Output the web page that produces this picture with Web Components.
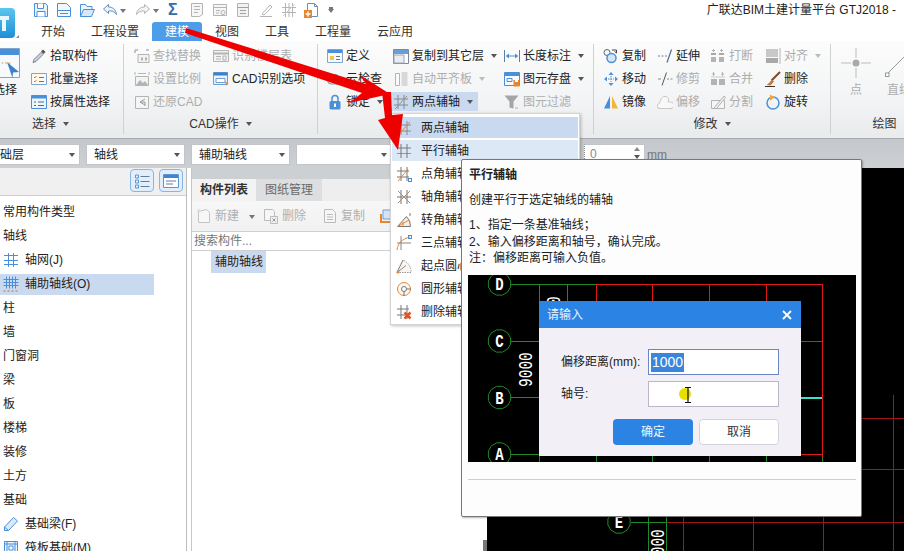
<!DOCTYPE html>
<html lang="zh">
<head>
<meta charset="utf-8">
<title>GTJ2018</title>
<style>
  html, body { margin: 0; padding: 0; background: #fff; overflow: hidden; }
  body { font: 12px/16px "Liberation Sans", "Noto Sans CJK SC", sans-serif; color: #222; }
</style>
</head>
<body>

<gt-app>
  <gt-topbar slot="top" title-text="广联达BIM土建计量平台 GTJ2018 - ">
    <gt-tab>开始</gt-tab>
    <gt-tab>工程设置</gt-tab>
    <gt-tab active>建模</gt-tab>
    <gt-tab>视图</gt-tab>
    <gt-tab>工具</gt-tab>
    <gt-tab>工程量</gt-tab>
    <gt-tab>云应用</gt-tab>
  </gt-topbar>

  <gt-ribbon slot="ribbon">
    <gt-group label="选择" style="--w:124px;--cols:31px 92px;--lp:22px">
      <gt-big icon="bigselect" style="grid-row:1/4;margin-left:-10px;width:30px">选择</gt-big>
      <gt-rb icon="pick">拾取构件</gt-rb>
      <gt-rb icon="batch" style="grid-column:2">批量选择</gt-rb>
      <gt-rb icon="attr" style="grid-column:2">按属性选择</gt-rb>
    </gt-group>
    <gt-group label="CAD操作" style="--w:194px;--pl:10px;--cols:79px 100px">
      <gt-rb icon="find" disabled>查找替换</gt-rb>
      <gt-rb icon="floor" disabled>识别楼层表</gt-rb>
      <gt-rb icon="scale" disabled>设置比例</gt-rb>
      <gt-rb icon="cadopt">CAD识别选项</gt-rb>
      <gt-rb icon="restore" disabled>还原CAD</gt-rb>
    </gt-group>
    <gt-group label="" style="--w:276px;--pl:9px;--cols:66px 111px 90px">
      <gt-rb icon="define">定义</gt-rb>
      <gt-rb icon="copylayer" caret>复制到其它层</gt-rb>
      <gt-rb icon="length" caret>长度标注</gt-rb>
      <gt-rb icon="cloud">云检查</gt-rb>
      <gt-rb icon="align" caret disabled>自动平齐板</gt-rb>
      <gt-rb icon="store" caret>图元存盘</gt-rb>
      <gt-rb icon="lock" caret>锁定</gt-rb>
      <gt-rb icon="twopt" caret active>两点辅轴</gt-rb>
      <gt-rb icon="filter" disabled>图元过滤</gt-rb>
    </gt-group>
    <gt-group label="修改" style="--w:237px;--pl:9px;--cols:54px 53px 55px 60px">
      <gt-rb icon="dup">复制</gt-rb>
      <gt-rb icon="extend">延伸</gt-rb>
      <gt-rb icon="break" disabled>打断</gt-rb>
      <gt-rb icon="alignr" caret disabled>对齐</gt-rb>
      <gt-rb icon="move">移动</gt-rb>
      <gt-rb icon="trim" disabled>修剪</gt-rb>
      <gt-rb icon="merge" disabled>合并</gt-rb>
      <gt-rb icon="broom">删除</gt-rb>
      <gt-rb icon="mirror">镜像</gt-rb>
      <gt-rb icon="offset" disabled>偏移</gt-rb>
      <gt-rb icon="split" disabled>分割</gt-rb>
      <gt-rb icon="rotate">旋转</gt-rb>
    </gt-group>
    <gt-group label="绘图" last style="--w:120px;--cols:50px 36px">
      <gt-big icon="bigpoint" disabled style="grid-row:1/4">点</gt-big>
      <gt-big icon="bigline" disabled style="grid-row:1/4">直线</gt-big>
    </gt-group>
  </gt-ribbon>

  <gt-toolbar slot="toolbar">
    <gt-select style="width:100px;margin-left:-20px">基础层</gt-select>
    <gt-select style="width:99px">轴线</gt-select>
    <gt-select style="width:99px">辅助轴线</gt-select>
    <gt-select style="width:96px"></gt-select>
    <gt-spin style="margin-left:186px">0</gt-spin>
  </gt-toolbar>

  <gt-left slot="left">
    <gt-item>常用构件类型</gt-item>
    <gt-item>轴线</gt-item>
    <gt-item icon="grid">轴网(J)</gt-item>
    <gt-item icon="subgrid" selected>辅助轴线(O)</gt-item>
    <gt-item>柱</gt-item>
    <gt-item>墙</gt-item>
    <gt-item>门窗洞</gt-item>
    <gt-item>梁</gt-item>
    <gt-item>板</gt-item>
    <gt-item>楼梯</gt-item>
    <gt-item>装修</gt-item>
    <gt-item>土方</gt-item>
    <gt-item>基础</gt-item>
    <gt-item icon="pencil">基础梁(F)</gt-item>
    <gt-item icon="raft">筏板基础(M)</gt-item>
  </gt-left>

  <gt-list slot="list"></gt-list>
  <gt-canvas slot="canvas"></gt-canvas>

  <gt-menu slot="over">
    <gt-menu-item icon="m1" state="on">两点辅轴</gt-menu-item>
    <gt-menu-item icon="m2" state="hover">平行辅轴</gt-menu-item>
    <gt-menu-item icon="m3">点角辅轴</gt-menu-item>
    <gt-menu-item icon="m4">轴角辅轴</gt-menu-item>
    <gt-menu-item icon="m5">转角辅轴</gt-menu-item>
    <gt-menu-item icon="m6">三点辅轴</gt-menu-item>
    <gt-menu-item icon="m7">起点圆心辅轴</gt-menu-item>
    <gt-menu-item icon="m8">圆形辅轴</gt-menu-item>
    <gt-menu-item icon="m9">删除辅轴</gt-menu-item>
  </gt-menu>

  <gt-tip slot="over" heading="平行辅轴">
    <p>创建平行于选定轴线的辅轴</p>
    <div>1、指定一条基准轴线；</div>
    <div>2、输入偏移距离和轴号，确认完成。</div>
    <div>注：偏移距离可输入负值。</div>
  </gt-tip>

  <gt-arrows slot="over"></gt-arrows>
</gt-app>

<script>
// icon drawings, all in a 16x16 box unless they carry their own viewBox
const B = '#4a90d9', G = '#b4b4b4', O = '#e8862e', D = '#6b7480';
const ICONS = {
  save: `<path d="M1.5 1.5h11l2 2v11h-13z" fill="#eaf2fb" stroke="${B}"/><path d="M4.5 1.5v5h6v-5M4 14.5v-5h8v5" fill="#fff" stroke="${B}"/>`,
  newdoc: `<path d="M1.5 1.5h9l4 4v9h-13z" fill="#f3f7fc" stroke="${B}"/><path d="M1.5 8.5h13M4 11.5h8" stroke="${B}"/>`,
  open: `<path d="M1.5 14.5v-12h5l1.5 2h5v3" fill="#eef4fb" stroke="${B}"/><path d="M1.5 14.5l3-7h11l-3 7z" fill="#d7e7f8" stroke="${B}"/>`,
  undo: `<path d="M6.5 2.5L1.5 7l5 4.5V9c3-.5 6 .5 8 3.5C14 7.5 10.5 5 6.5 5z" fill="#eef3f8" stroke="#5f8fc0"/>`,
  redo: `<path d="M9.5 2.5l5 4.5-5 4.5V9c-3-.5-6 .5-8 3.5C2 7.5 5.5 5 9.5 5z" fill="#f4f4f4" stroke="${G}"/>`,
  q1: `<path d="M2.5 1.5h11v11l-3 2h-8z" fill="#f6f6f6" stroke="${G}"/><path d="M5 4.5h6M5 7.5h6M5 10.5h4" stroke="${G}"/>`,
  q2: `<path d="M1.5 2.5h13v11h-13z" fill="#f6f6f6" stroke="${G}"/><path d="M1.5 5.5h13M4 8.5h4M4 11h3" stroke="${G}"/><circle cx="11" cy="10.5" r="2" fill="none" stroke="${G}"/>`,
  q3: `<path d="M2.5 1.5h11v13h-11z" fill="#f2f2f2" stroke="${G}"/><path d="M2.5 5.5h11M5 8.5h6M5 11.5h6" stroke="#a0a0a0"/>`,
  q4: `<path d="M2 14.5h12M4 12l8-9 2 2-8 8z" fill="none" stroke="${G}"/>`,
  q5: `<path d="M1 5.5h14M1 10.5h14M4.5 1v14M8 1v14M11.5 1v14" stroke="${G}"/><path d="M2 14L14 2" stroke="#ccc"/>`,
  q6: `<path d="M3.5 1.5h7l3 3v10h-10z" fill="#fff" stroke="#6c8fb5"/><path d="M10.5 1.5v3h3" fill="none" stroke="#6c8fb5"/><path d="M0 8h8v8H0z" fill="${O}"/><path d="M4 9.5v5M1.5 12h5" stroke="#fff" stroke-width="1.5"/>`,
  pick: `<path d="M2 14.5l1-3 7-7 2 2-7 7z" fill="#c9d2dc" stroke="#7a8591"/><path d="M10 3.5l2-2 2.5 2.5-2 2z" fill="#555"/>`,
  batch: `<path d="M.5 2.5h15v11H.5z" fill="#fdf8f0" stroke="#7ea6d3"/><path d="M3 6l1 1 1.5-2M3 10l1 1 1.5-2" fill="none" stroke="${O}"/><path d="M8 6.5h5M8 10.5h5" stroke="${D}"/>`,
  attr: `<path d="M.5 1.5h15v13H.5z" fill="#eef5fc" stroke="${B}"/><path d="M.5 1.5h15v3H.5z" fill="${B}"/><path d="M3 8h2M7 8h6M3 11.5h2M7 11.5h6" stroke="#4f6c8c"/>`,
  find: `<path d="M1 2h3M1 2v3M12 2h3" stroke="${G}" stroke-width="1.5"/><path d="M4 6.5h11v8H4z" fill="#f3f3f3" stroke="${G}"/><path d="M7 9.5h2v3H7zM11 9.5h2v3h-2z" fill="${G}"/>`,
  scale: `<path d="M1.5 5.5h13v9h-13z" fill="#f3f3f3" stroke="${G}"/><path d="M2 14l4-5 3 3 2-2 3 4z" fill="${G}"/><path d="M1 1v3M15 1v3M4 2.5h8" stroke="${G}"/>`,
  restore: `<path d="M1.5 2.5h13v12h-13z" fill="#f5f5f5" stroke="${G}"/><path d="M11 5L6 8l5 3M6 8h5v4" fill="none" stroke="#999"/>`,
  floor: `<path d="M.5 2.5h15v11H.5z" fill="#f3f3f3" stroke="${G}"/><path d="M.5 5.5h15" stroke="${G}" stroke-width="2"/><path d="M3 8.5h5M3 11h5M10 8h3v4h-3z" fill="none" stroke="${G}"/>`,
  cadopt: `<path d="M.5 1.5h14v12H.5z" fill="#eaf2fb" stroke="#6f9fd2"/><path d="M.5 1.5h14v3H.5z" fill="#3f7fc8"/><path d="M3 7.5h9v4H3z" fill="#fff" stroke="#6f9fd2"/><path d="M12 10l3.5 3-2 .2-.5 2z" fill="${O}"/>`,
  define: `<path d="M.5 1.5h15v13H.5z" fill="#f7f9fc" stroke="#7ea6d3"/><path d="M1 2h14v3H1z" fill="${B}"/><path d="M3 8h4v4H3z" fill="#f3c64a"/><path d="M9 8.5h4M9 11.5h4" stroke="${D}"/>`,
  cloud: `<path d="M4 13a3 3 0 0 1-.5-6A4.5 4.5 0 0 1 12 6a3.5 3.5 0 0 1 0 7z" fill="#cfd9e4" stroke="#7e98b4"/>`,
  lock: `<rect x="2.5" y="7" width="11" height="8.5" rx="1.5" fill="${B}"/><path d="M5 7V4.5a3 3 0 0 1 6 0V7" fill="none" stroke="${B}" stroke-width="1.5"/><rect x="7" y="9.5" width="2" height="3.5" fill="#fff"/>`,
  copylayer: `<path d="M.5 1.5h15v14H.5z" fill="#fff" stroke="#7a8a9c"/><path d="M1 2h14v4H1z" fill="#6d9ed1"/><path d="M1 7h10v8H1z" fill="#e9edf1" stroke="#9aa5b1"/>`,
  align: `<path d="M2.5 2.5h4v12h-4z" fill="#fafafa" stroke="${G}"/><path d="M8.5 1h6v14h-6z" fill="#d8d8d8"/>`,
  twopt: `<path d="M1 5h14M1 11h14M5 1v14M11 1v14" stroke="#7f8a96"/><path d="M2 15L14 2" stroke="#a98f7c"/>`,
  length: `<path d="M.5 2v12M15.5 2v12" stroke="#5f7f9f"/><path d="M2 8h12" stroke="${B}"/><path d="M2 8l3-2.5v5zM14 8l-3-2.5v5z" fill="${B}"/>`,
  store: `<path d="M.5 1.5h15v13H.5z" fill="#f7f9fc" stroke="${B}"/><path d="M1 2h14v3H1z" fill="${B}"/><path d="M3 7.5h5v3H3z" fill="none" stroke="${B}"/><path d="M9.5 9h6v6.5h-6z" fill="${O}"/><path d="M11 9h3v2h-3z" fill="#fff"/>`,
  filter: `<path d="M.5 1.5h14l-5 6v7l-4-1v-6z" fill="#a5a5a5"/><path d="M11 14h3" stroke="${G}"/>`,
  dup: `<circle cx="4" cy="4.5" r="3" fill="none" stroke="#5c6670"/><circle cx="8.5" cy="10" r="4.5" fill="#d4e5f7" stroke="${B}" stroke-width="1.5"/><path d="M9 2h4.500v3M11.5 3.5l2 1.500" fill="none" stroke="#444"/>`,
  extend: `<path d="M1 8h2M4.5 8h2M8 8h2" stroke="#7a8591"/><path d="M10 14.5L14.500 1.500" stroke="#4f6c8c" stroke-width="1.2"/>`,
  trim: `<path d="M1 8h3M10 8h2M13.5 8h2" stroke="#8a8a8a"/><path d="M5 14.5L9.500 1.500" stroke="#555"/>`,
  break: `<path d="M1 5h5v2H1zM9 5h5v2H9z" fill="#a8a8a8"/><path d="M1 9h5v5H1zM9 9h5v5H9z" fill="${G}"/><path d="M3.5 1v3M11.5 1v3M2 2.5h3M10 2.5h3" stroke="${G}"/>`,
  merge: `<path d="M1 8h6v6H1zM9 8h6v6H9z" fill="${G}"/><path d="M1 6h14" stroke="#ccc"/><path d="M3.5 1v4M12.5 1v4M2 3h3M11 3h3" stroke="${G}"/>`,
  split: `<path d="M1.5 6.5h13v8h-13z" fill="#f6f6f6" stroke="${G}"/><path d="M4 14L14 2l1.5 1.5L7 14" fill="#eee" stroke="${G}"/>`,
  alignr: `<path d="M1 1h12v8H1z" fill="#c8c8c8"/><path d="M1 10h12v5H1z" fill="#a8a8a8"/><path d="M15 0v16" stroke="${G}"/>`,
  move: `<path d="M8 1l2.5 3h-5zM8 15l2.5-3h-5zM1 8l3-2.5v5zM15 8l-3-2.5v5z" fill="${B}"/><path d="M5 8h6M8 5v6" stroke="${B}" stroke-dasharray="1.5 1"/>`,
  broom: `<path d="M15 1L6.5 9.5" stroke="#7d4a24" stroke-width="2"/><path d="M7 8.5l2 2-3.5 4-4-.5c2-1 3.500-3 5.500-5.500z" fill="#c07a3f"/><path d="M0 15.5h10" stroke="#333"/>`,
  mirror: `<path d="M7 2L1 14.5h6z" fill="${B}"/><path d="M9 2l6 12.5H9z" fill="#f2b53a"/>`,
  offset: `<path d="M3 14.5a2.5 2.5 0 0 1-.5-5c.5-3 2-7 5.5-7s4 3 3 5.5h2.5a3 3 0 0 1 0 6.500z" fill="#f8f8f8" stroke="#c8c8c8"/><path d="M1 14.5h14" stroke="#c8c8c8"/>`,
  rotate: `<circle cx="8" cy="9" r="6" fill="none" stroke="${B}" stroke-width="1.5"/><path d="M5 .5l5 3-5 3z" fill="#f2a33a"/>`,
  grid: `<path d="M1 3.5h14M1 8.5h14M1 12.5h14M5.5 1v14M10.5 1v14" stroke="${B}"/>`,
  subgrid: `<path d="M.5 3.5h15M.5 6.5h15M.5 9.5h15M3.5 .5v12M6.5 .5v12M9.5 .5v12M12.5 .5v12" stroke="${B}"/><path d="M.5 14h2v2h-2zM4.5 14h2v2h-2zM8.5 14h2v2h-2zM12.5 14h2v2h-2z" fill="#c9a58a"/>`,
  pencil: `<path d="M1.5 11l9-9.5 4 3.5-9 9.500h-4z" fill="#dbe9f8" stroke="${B}"/><path d="M1.5 11l4 3.5" stroke="${B}"/>`,
  raft: `<path d="M1.5 1.5h13v13h-13z" fill="#eaf2fb" stroke="${B}"/><path d="M4 1.5v13M12 1.5v13M1.5 4h13M1.5 12h13" stroke="${B}"/><path d="M6 6h4v4H6z" fill="#fff" stroke="${B}"/>`,
  listbtn: `<path d="M1.5 2h3v3h-3zM1.5 7h3v3h-3zM1.5 12h3v3h-3z" fill="none" stroke="#5a96d6"/><path d="M6.5 3.5h9M6.5 8.5h9M6.5 13.5h9" stroke="#5f7f9f"/>`,
  winbtn: `<path d="M.5 1.5h15v13H.5z" fill="#fff" stroke="#5a96d6"/><path d="M1 2h14v3H1z" fill="#3f86d1"/><path d="M3 8h10M3 11h7" stroke="#5f7f9f"/>`,
  newgrey: `<path d="M2.5 3.5l8-2 3 3v10h-11z" fill="#f7f7f7" stroke="#c4c4c4"/><path d="M1 1l3 3M4 1L1 4" stroke="#d8d8d8"/>`,
  delgrey: `<path d="M1.5 1.5h8l2 2v9h-10z" fill="#f6f6f6" stroke="#bbb"/><path d="M7.5 8.5h7v7h-7z" fill="#f0f0f0" stroke="#bbb"/><path d="M9.5 10.5l3 3M12.5 10.5l-3 3" stroke="#999"/>`,
  copygrey: `<path d="M2.5 1.5h8l3 3v10h-11z" fill="#f6f6f6" stroke="#bbb"/><path d="M5 6.5h6M5 9h6M5 11.5h6" stroke="#bbb"/>`,
  layer: `<path d="M1 15V6h2v7h11v2z" fill="${O}"/><path d="M4 2h10v9H4z" fill="#d5e5f6" stroke="#6f9fd2"/>`,
  m1: `<path d="M1 5h14M1 11h14M5 1v14M11 1v14" stroke="#8a8a8a"/><path d="M2 15L14 2" stroke="${O}"/>`,
  m2: `<path d="M1 5h14" stroke="#777"/><path d="M1 10.5h14" stroke="${O}"/><path d="M5 1v14M11 1v14" stroke="#777"/>`,
  m3: `<path d="M1 5h12M1 11h12M5 1v14M11 1v14" stroke="#777"/><path d="M2 15L12 3" stroke="${O}"/><rect x="12.5" y="12.5" width="3" height="3" fill="none" stroke="${B}"/>`,
  m4: `<path d="M1 8h14M5 1v14M11 1v14" stroke="#777"/><path d="M2 2l12 12M2 14L14 2" stroke="#a98f7c"/>`,
  m5: `<path d="M1.5 14.5h13a13 13 0 0 0-4-10z" fill="#f5ede5" stroke="#777"/><path d="M1.5 14.5L13 8M7 10v4.5" stroke="${O}"/><path d="M14 1v3" stroke="#777"/>`,
  m6: `<path d="M1 15C2 8 6 4 14 2" fill="none" stroke="${O}"/><path d="M1 8h14M5 1v14" stroke="#888"/><rect x="12.5" y=".5" width="3" height="3" fill="none" stroke="${B}"/>`,
  m7: `<path d="M1 14.5h14A13 13 0 0 0 7 2z" fill="#faf5f0" stroke="#999" stroke-dasharray="1.5 1"/><path d="M1 14.5L7 2M1 14.5l9-7" stroke="#888"/><circle cx="2" cy="14" r="1.5" fill="${O}"/>`,
  m8: `<circle cx="8" cy="8" r="6.5" fill="#fdf7f0" stroke="${O}"/><path d="M8 8h7M8 8v7" stroke="#777"/><circle cx="8" cy="8" r="2.5" fill="#fff" stroke="#777"/>`,
  m9: `<path d="M1 5h12M1 11h12M5 1v14M11 1v14" stroke="#777"/><path d="M8.5 8.5l6 6M14.5 8.5l-6 6" stroke="#e8501e" stroke-width="2.5"/>`,
  bigselect: `<svg viewBox="0 0 30 30" width="30" height="30"><path d="M.5 .5h29v29H.5z" fill="#f6f9fd" stroke="#7ea6d3"/><path d="M1 1h28v6H1z" fill="${B}"/><path d="M1 15h20" stroke="#e8a33a" stroke-dasharray="2 1.5"/><path d="M17 14l12 10-6 .5-.5 5.5z" fill="#3f7fc8"/></svg>`,
  bigpoint: `<svg viewBox="0 0 30 30" width="30" height="30"><path d="M15 0v10M15 20v10M0 15h10M20 15h10" stroke="#bbb"/><circle cx="15" cy="15" r="3.5" fill="#aaa"/></svg>`,
  bigline: `<svg viewBox="0 0 30 30" width="30" height="30"><path d="M4 25L28 1" stroke="#999"/><rect x="1.5" y="25" width="3.5" height="3.5" fill="#fff" stroke="#999"/></svg>`
};

const BASE = `font: 12px/16px "Liberation Sans", "Noto Sans CJK SC", sans-serif;`;

function mount(el, html) {
  el.attachShadow({mode: 'open'}).innerHTML = html;
}

class GtIcon extends HTMLElement {
  connectedCallback() {
    const body = ICONS[this.getAttribute('name')] || '';
    const svg = body.startsWith('<svg') ? body : `<svg viewBox="0 0 16 16" width="16" height="16">${body}</svg>`;
    mount(this, `<style>:host{display:block;flex:none;line-height:0}</style>${svg}`);
  }
}

class GtApp extends HTMLElement {
  constructor() {
    super();
    mount(this, `<style>
      :host{display:flex;flex-direction:column;position:relative;width:904px;height:551px;overflow:hidden;${BASE}}
      .main{display:flex;height:383px;overflow:hidden}
    </style>
    <slot name="top"></slot>
    <slot name="ribbon"></slot>
    <slot name="toolbar"></slot>
    <div class="main">
      <slot name="left"></slot>
      <slot name="list"></slot>
      <slot name="canvas"></slot>
    </div>
    <slot name="over"></slot>`);
  }
}

class GtTopbar extends HTMLElement {
  connectedCallback() {
    const qa = ['save', 'newdoc', 'open', 'undo', 'c', 'redo', 'c', 'S', 'q1', 'q2', 'q3', 'q4', 'q5', 'q6', 'e'];
    const items = qa.map(n => {
      if (n === 'c') return '<i class="c"></i>';
      if (n === 'e') return '<i class="c end"></i>';
      if (n === 'S') return '<b class="sum">Σ</b>';
      return `<gt-icon name="${n}"></gt-icon>`;
    }).join('');
    mount(this, `<style>
      :host{display:flex;height:41px;background:#fff;border-bottom:1px solid #d6d6d6;box-sizing:content-box;margin-bottom:-1px}
      .logo{width:28px;flex:none;padding-top:8px;box-sizing:border-box}
      .rest{flex:1;min-width:0;display:flex;flex-direction:column}
      .qa{height:22px;display:flex;align-items:center;gap:7px;padding:0 8px 2px 5px;box-sizing:border-box}
      .c{width:0;height:0;border:3px solid transparent;border-top:4px solid #777;border-bottom:0;margin:2px 2px 0 -5px}
      .c.end{margin-left:1px;box-shadow:0 -3px 0 -1px #777}
      .sum{width:14px;color:#2f6ea8;font-size:16px;line-height:16px}
      .title{margin-left:auto;white-space:nowrap;color:#222}
      .tabs{display:flex;height:19px;align-items:stretch}
    </style>
    <div class="logo"><svg width="20" height="32" viewBox="0 0 20 32">
      <defs><linearGradient id="lg" x1="0" y1="0" x2="0" y2="1"><stop offset="0" stop-color="#5bc6ee"/><stop offset="1" stop-color="#1d8fd6"/></linearGradient></defs>
      <path d="M-6 0h17a4 4 0 0 1 4 4v22a4 4 0 0 1-4 4H-6z" fill="url(#lg)"/>
      <path d="M0 8h9v4H6v11H2V12H0z" fill="#e9f7fd"/>
      <path d="M19 27v3h-3z" fill="#888"/>
    </svg></div>
    <div class="rest">
      <div class="qa">${items}<span class="title">${this.getAttribute('title-text')}</span></div>
      <div class="tabs"><slot></slot></div>
    </div>`);
  }
}

class GtTab extends HTMLElement {
  constructor() {
    super();
    mount(this, `<style>
      :host{display:flex;align-items:center;padding:0 13px;color:#333;border-radius:3px 3px 0 0}
      :host([active]){background:#4d9de8;color:#fff}
    </style><slot></slot>`);
  }
}

class GtRibbon extends HTMLElement {
  constructor() {
    super();
    mount(this, `<style>
      :host{display:flex;overflow:hidden;background:linear-gradient(#fcfcfc,#f3f4f5 60%,#e8eaec);border-bottom:1px solid #a8acb0;box-sizing:border-box;height:98px}
    </style><slot></slot>`);
  }
}

class GtGroup extends HTMLElement {
  connectedCallback() {
    const label = this.getAttribute('label');
    const cap = label ? `<div class="cap">${label}<i></i></div>` : '';
    mount(this, `<style>
      :host{display:flex;flex-direction:column;flex:none;width:var(--w);box-sizing:border-box;border-right:1px solid #cfd2d5;margin:3px 0 4px;color:#222}
      :host([last]){border-right:0}
      .rows{display:grid;grid-template-columns:var(--cols);grid-auto-rows:23px;height:69px;padding-left:var(--pl,0);white-space:nowrap}
      .cap{display:flex;justify-content:center;align-items:center;height:24px;padding-right:var(--lp,0);color:#333}
      .cap i{width:0;height:0;border:3.5px solid transparent;border-top:4px solid #555;border-bottom:0;margin:1px 0 0 7px}
    </style>
    <div class="rows"><slot></slot></div>${cap}`);
  }
}

class GtRb extends HTMLElement {
  connectedCallback() {
    const caret = this.hasAttribute('caret') ? '<i></i>' : '';
    mount(this, `<style>
      :host{display:flex;align-items:center;color:#222}
      :host([disabled]){color:#adadad}
      .b{display:flex;align-items:center;gap:3px;height:19px;padding:0 3px;margin-left:-3px}
      :host([active]) .b{background:#c9d9ef;padding-right:5px}
      i{width:0;height:0;border:3px solid transparent;border-top:4px solid #555;border-bottom:0;margin:1px 0 0 4px}
      :host([disabled]) i{border-top-color:#bbb}
    </style>
    <div class="b"><gt-icon name="${this.getAttribute('icon')}"></gt-icon><span><slot></slot></span>${caret}</div>`);
  }
}

class GtBig extends HTMLElement {
  connectedCallback() {
    mount(this, `<style>
      :host{display:flex;flex-direction:column;align-items:center;gap:4px;padding-top:4px;white-space:nowrap;color:#222}
      :host([disabled]){color:#adadad}
    </style>
    <gt-icon name="${this.getAttribute('icon')}"></gt-icon><span><slot></slot></span>`);
  }
}

class GtToolbar extends HTMLElement {
  constructor() {
    super();
    mount(this, `<style>
      :host{display:flex;align-items:flex-start;gap:6px;height:29px;padding-top:5px;box-sizing:border-box;background:linear-gradient(#c4c7cb,#cdd0d3);overflow:hidden}
    </style><slot></slot>`);
  }
}

class GtSelect extends HTMLElement {
  constructor() {
    super();
    mount(this, `<style>
      :host{display:flex;align-items:center;flex:none;height:21px;box-sizing:border-box;background:#fff;border:1px solid #c2c4c7;padding:0 4px 0 3px;color:#222}
      span{flex:1;white-space:nowrap;margin-left:4px}
      i{width:0;height:0;border:3px solid transparent;border-top:4px solid #555;border-bottom:0;margin-top:1px}
    </style><span><slot></slot></span><i></i>`);
  }
}

class GtSpin extends HTMLElement {
  constructor() {
    super();
    mount(this, `<style>
      :host{display:flex;align-items:flex-start;flex:none;color:#888}
      .box{width:61px;height:21px;box-sizing:border-box;background:#fff;border:1px solid #c2c4c7;border-left:1px dotted #888;padding:1px 0 0 5px;position:relative}
      .mm{margin:3px 0 0 2px;color:#777}
      i{position:absolute;right:4px;width:0;height:0;border:3px solid transparent}
      .up{top:2px;border-bottom:4px solid #888;border-top:0}
      .dn{top:10px;border-top:4px solid #555;border-bottom:0}
    </style>
    <div class="box"><slot></slot><i class="up"></i><i class="dn"></i></div><span class="mm">mm</span>`);
  }
}

class GtLeft extends HTMLElement {
  constructor() {
    super();
    mount(this, `<style>
      :host{display:flex;flex-direction:column;flex:none;width:187px;box-sizing:border-box;background:#fff;border-right:1px solid #bdbdbd}
      .bar{display:flex;justify-content:flex-end;gap:5px;height:28px;box-sizing:border-box;padding:1px 3px 0 0;background:#f0f0f0;border-bottom:1px solid #cfcfcf;flex:none}
      .btn{display:flex;align-items:center;justify-content:center;width:24px;height:23px;border:1px solid #84b6e8;border-radius:4px;background:#e3eefa;box-sizing:border-box}
      .items{padding-top:4px}
    </style>
    <div class="bar">
      <div class="btn"><gt-icon name="listbtn"></gt-icon></div>
      <div class="btn"><gt-icon name="winbtn"></gt-icon></div>
    </div>
    <div class="items"><slot></slot></div>`);
  }
}

class GtItem extends HTMLElement {
  connectedCallback() {
    const icon = this.getAttribute('icon');
    const ic = icon ? `<gt-icon name="${icon}"></gt-icon>` : '';
    mount(this, `<style>
      :host{display:flex;align-items:center;height:24px;color:#222;white-space:nowrap}
      .r{display:flex;align-items:center;gap:6px;height:21px;width:151px;padding-left:3px}
      :host([selected]) .r{background:#c9d9ef}
    </style><div class="r">${ic}<span><slot></slot></span></div>`);
  }
}

class GtList extends HTMLElement {
  constructor() {
    super();
    mount(this, `<style>
      :host{display:flex;flex-direction:column;flex:none;width:292px;margin-left:4px;box-sizing:border-box;border-left:1px solid #c6c6c6;background:#fff;color:#222}
      .band{height:11px;background:#cdd0d3;flex:none}
      .tabs{display:flex;height:22px;background:#eeeeee;flex:none}
      .tabs div{display:flex;align-items:center;justify-content:center;width:64px}
      .tabs .on{background:#f3f3f3;font-weight:bold;color:#333}
      .tabs .off{background:#dcdee0;color:#6a6a6a;width:66px}
      .tools{display:flex;align-items:center;height:30px;flex:none;padding-left:4px;box-sizing:border-box;background:linear-gradient(#f7f7f7,#f1f1f1);color:#b0b0b0}
      .tool{display:flex;align-items:center;gap:3px}
      .tool i{width:0;height:0;border:3px solid transparent;border-top:4px solid #777;border-bottom:0;margin:1px 0 0 7px}
      .search{height:20px;box-sizing:border-box;border:solid #cfcfcf;border-width:1px 0;padding:1px 0 0 2px;color:#777;flex:none;line-height:17px}
      .sel{display:inline-block;margin-left:19px;padding:3px 4px;line-height:16px;background:#c9d9ef;width:47px;white-space:nowrap}
    </style>
    <div class="band"></div>
    <div class="tabs"><div class="on">构件列表</div><div class="off">图纸管理</div></div>
    <div class="tools">
      <div class="tool" style="width:67px"><gt-icon name="newgrey"></gt-icon>新建<i></i></div>
      <div class="tool" style="width:59px"><gt-icon name="delgrey"></gt-icon>删除</div>
      <div class="tool" style="width:57px"><gt-icon name="copygrey"></gt-icon>复制</div>
      <gt-icon name="layer"></gt-icon>
    </div>
    <div class="search">搜索构件...</div>
    <div><span class="sel">辅助轴线</span></div>`);
  }
}

// axis bubble with its letter, drawn tall and narrow like the CAD font
function bubble(x, y, ch) {
  const pts = [];
  for (let i = 0; i < 12; i++) {
    const a = (i + 0.5) * Math.PI / 6;
    pts.push((x + 11.5 * Math.cos(a)).toFixed(1) + ',' + (y + 11.5 * Math.sin(a)).toFixed(1));
  }
  return `<polygon points="${pts.join(' ')}" fill="none" stroke="#1f8a2a"/>
    <text transform="translate(${x},${y + 6}) scale(1,1.35)" text-anchor="middle" fill="#fff" style="font:bold 14px 'Liberation Mono',monospace">${ch}</text>`;
}

// dimension text turned on its side
function dim(x, y) {
  return `<text transform="translate(${x},${y}) rotate(-90) scale(1,1.4)" fill="#fff" style="font:14.5px 'Liberation Mono',monospace">9000</text>`;
}

class GtCanvas extends HTMLElement {
  constructor() {
    super();
    mount(this, `<style>
      :host{display:flex;flex:1;min-width:0;background:#000}
      .strip{width:4px;flex:none;background:linear-gradient(#fff 372px,#777 372px)}
      svg{display:block;flex:none}
    </style>
    <div class="strip"></div>
    <svg viewBox="487 168 417 383" width="417" height="383" shape-rendering="crispEdges">
      <g stroke="#a01818" fill="none">
        <path d="M862 418.5h42M862 469.5h42M667 522.5h237"/>
        <path d="M893.5 395v156M823.5 517v34M753.5 517v34M683.5 517v34"/>
      </g>
      <g stroke="#1f8a2a" fill="none">
        <path d="M631 522.5h36M648.5 517v34M666.5 517v34"/>
      </g>
      <g shape-rendering="auto">${bubble(619, 522, 'E')}${dim(664, 564)}</g>
    </svg>`);
  }
}

class GtMenu extends HTMLElement {
  constructor() {
    super();
    mount(this, `<style>
      :host{position:absolute;left:390px;top:113px;width:190px;height:212px;box-sizing:border-box;padding:2px 1px;background:#fff;border:1px solid #d4d4d4;box-shadow:1px 1px 3px rgba(0,0,0,.25);overflow:hidden}
    </style><slot></slot>`);
  }
}

class GtMenuItem extends HTMLElement {
  connectedCallback() {
    mount(this, `<style>
      :host{display:flex;height:23px;align-items:center;white-space:nowrap;color:#222}
      .r{display:flex;align-items:center;gap:7px;width:100%;height:21px;padding-left:4px;box-sizing:border-box}
      :host([state=on]) .r{background:#c9d9ef}
      :host([state=hover]) .r{background:#dde8f7}
    </style><div class="r"><gt-icon name="${this.getAttribute('icon')}" style="width:18px"></gt-icon><span><slot></slot></span></div>`);
  }
}

class GtTip extends HTMLElement {
  connectedCallback() {
    mount(this, `<style>
      :host{position:absolute;left:461px;top:159px;width:401px;height:358px;box-sizing:border-box;padding:7px 5px 0 7px;background:#fdfdfe;border:1px solid #777;border-radius:2px;box-shadow:1px 1px 2px rgba(0,0,0,.3);color:#222}
      h4{margin:0 0 9px;font-size:12px;line-height:16px;font-weight:bold}
      .txt{height:83px;line-height:16.5px}
      ::slotted(p){margin:0 0 9px;line-height:16px}
      .pic{position:relative;width:388px;height:187px;margin-left:-1px;background:#000;overflow:hidden}
      svg{display:block}
      hr{margin:17px 0 0 -1px;width:388px;border:0;border-top:1px solid #cfcfcf}
    </style>
    <h4>${this.getAttribute('heading')}</h4>
    <div class="txt"><slot></slot></div>
    <div class="pic">
      <svg viewBox="468 275 388 187" width="388" height="187" shape-rendering="crispEdges">
        <g fill="none" stroke="#1f8a2a">
          <path d="M511 284.5h86M511 341.5h30M511 397.5h30M511 454.5h30M539.5 284v178M567.5 284v20"/>
          <path d="M596.5 456v6M652.5 456v6M709.5 456v6M766.5 456v6M822.5 456v6"/>
        </g>
        <g fill="none" stroke="#e01818">
          <path d="M597 284.5h225.5v172M596.5 284v20M652.5 284v20M709.5 284v20M766.5 284v20M800 341.5h22M800 454.5h22"/>
        </g>
        <path d="M800 398h22" stroke="#3fe0d0" stroke-width="2"/>
        <g shape-rendering="auto">
          ${bubble(499.5, 284, 'D')}${bubble(499.5, 341, 'C')}${bubble(499.5, 397.5, 'B')}${bubble(499.5, 454, 'A')}
          ${dim(532, 387)}${dim(560, 331)}
        </g>
      </svg>
      <gt-dialog></gt-dialog>
    </div>
    <hr>`);
  }
}

class GtDialog extends HTMLElement {
  constructor() {
    super();
    mount(this, `<style>
      :host{position:absolute;left:71px;top:26px;width:262px;height:155px;background:#f3eff7;color:#222}
      .head{display:flex;align-items:center;justify-content:space-between;height:27px;padding:0 9px 0 8px;background:#2b83e4;color:#e9f2fd}
      .head svg{display:block}
      .body{padding:21px 22px 0 22px;display:grid;grid-template-columns:87px 131px;grid-auto-rows:26px;row-gap:6px;align-items:center}
      .f{height:26px;box-sizing:border-box;background:#fff;border:1px solid #b9b7c8;position:relative;display:flex;align-items:center;padding-left:2px}
      .f.on{border-color:#6b86c6}
      .f.on span{background:#3a86dc;color:#fff;font-size:14px;line-height:19px;padding:0 1px}
      .dot{position:absolute;left:30px;top:6px;width:12px;height:12px;border-radius:50%;background:#e6e000}
      .cur{position:absolute;left:35px;top:5px}
      .btns{display:flex;justify-content:flex-end;gap:6px;padding:12px 22px 0 0}
      .btns div{display:flex;align-items:center;justify-content:center;width:80px;height:26px;box-sizing:border-box;border-radius:4px}
      .ok{background:#2b83e4;color:#f2f7fe}
      .no{background:#fff;border:1px solid #d4d2dc;color:#333}
    </style>
    <div class="head"><span>请输入</span>
      <svg width="10" height="10" viewBox="0 0 10 10"><path d="M1 1l8 8M9 1l-8 8" stroke="#fff" stroke-width="1.8"/></svg>
    </div>
    <div class="body">
      <span>偏移距离(mm):</span><div class="f on"><span>1000</span></div>
      <span>轴号:</span><div class="f"><i class="dot"></i>
        <svg class="cur" width="8" height="16" viewBox="0 0 8 16"><path d="M1 .5h6M1 15.5h6M4 .5v15" stroke="#111" stroke-width="1.2" fill="none"/></svg>
      </div>
    </div>
    <div class="btns"><div class="ok">确定</div><div class="no">取消</div></div>`);
  }
}

class GtArrows extends HTMLElement {
  constructor() {
    super();
    mount(this, `<style>
      :host{position:absolute;left:0;top:0;width:904px;height:551px;pointer-events:none}
      svg{display:block}
    </style>
    <svg width="904" height="551" viewBox="0 0 904 551">
      <polygon fill="#ee0000" points="186,28 366,84 360,75 390,94 349,103 362,93 185,33"/>
      <polygon fill="#ee0000" points="382,92 391,92 392,115 403,114 398,150 378,120 385,118"/>
    </svg>`);
  }
}

customElements.define('gt-icon', GtIcon);
customElements.define('gt-tab', GtTab);
customElements.define('gt-topbar', GtTopbar);
customElements.define('gt-ribbon', GtRibbon);
customElements.define('gt-group', GtGroup);
customElements.define('gt-rb', GtRb);
customElements.define('gt-big', GtBig);
customElements.define('gt-toolbar', GtToolbar);
customElements.define('gt-select', GtSelect);
customElements.define('gt-spin', GtSpin);
customElements.define('gt-item', GtItem);
customElements.define('gt-left', GtLeft);
customElements.define('gt-list', GtList);
customElements.define('gt-canvas', GtCanvas);
customElements.define('gt-menu-item', GtMenuItem);
customElements.define('gt-menu', GtMenu);
customElements.define('gt-dialog', GtDialog);
customElements.define('gt-tip', GtTip);
customElements.define('gt-arrows', GtArrows);
customElements.define('gt-app', GtApp);
</script>
</body>
</html>
